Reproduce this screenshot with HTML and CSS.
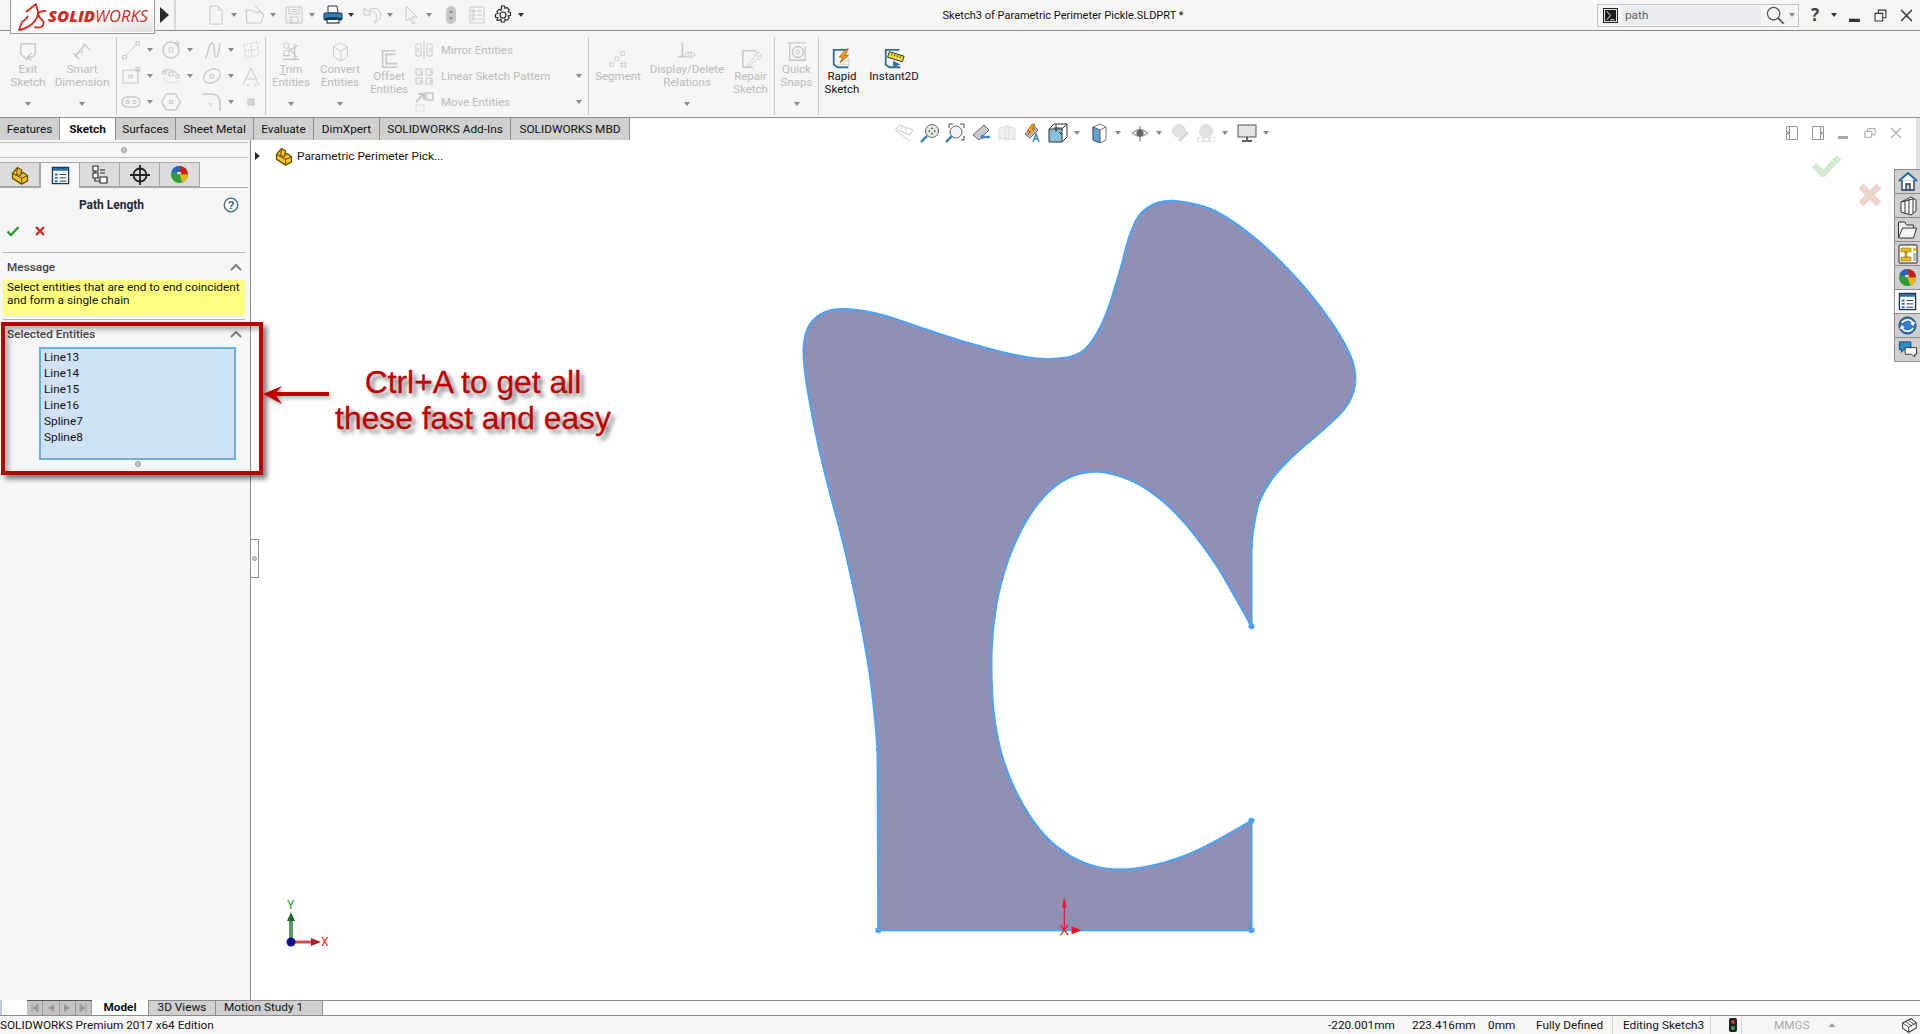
FILE: index.html
```html
<!DOCTYPE html>
<html lang="en">
<head>
<meta charset="utf-8">
<title>Sketch3 of Parametric Perimeter Pickle.SLDPRT</title>
<link rel="stylesheet" href="styles.css">
</head>
<body>
<svg class="defs" width="0" height="0" aria-hidden="true">
  <symbol id="part" viewBox="0 0 24 24"><path d="M3 10 9 3l5 3-1 5 3-2 5 4v6l-7 4-11-7z" fill="#f4c430" stroke="#6b5200" stroke-width="1.600" stroke-linejoin="round"/><path d="M3 10l11 6v7M14 16l7-3M9 3l-1 8 5 2" fill="none" stroke="#6b5200" stroke-width="1.300"/></symbol>
  <symbol id="list" viewBox="0 0 20 20"><rect x="1.500" y="1.500" width="17" height="17" fill="#fff" stroke="#1c3552" stroke-width="1.400"/><rect x="2" y="2" width="16" height="3" fill="#2d6ea8"/><path d="M4 8h3v2H4zM4 11.500h3v2H4zM4 15h3v2H4z" fill="#2d6ea8"/><path d="M9 9h7M9 12.500h7M9 16h7" stroke="#1c3552"/></symbol>
  <symbol id="ball" viewBox="0 0 20 20"><circle cx="10" cy="10" r="9" fill="#2f9e3a"/><path d="M10 10V1A9 9 0 0 1 19 10z" fill="#c8201a"/><path d="M10 10V1A9 9 0 0 0 1.500 7z" fill="#2566c4"/><path d="M10 10h9a9 9 0 0 1-6 8.500z" fill="#e9b714"/><path d="M7 8q3-2 5 0l-1 2q-2-1-3 0z" fill="#fff" opacity=".8"/></symbol>
</svg>

<header class="titlebar">
  <div class="logo">
    <svg class="ds" viewBox="0 0 30 28" width="30" height="28"><path d="M9 9 19 1l2 8q0 7-6 12-6 5-13 6l3-8q4-2 6-6M29 8q-7 0-8 3 1 4 5 7 2 4-2 6-3 1-7 0" fill="none" stroke="#d32b1e" stroke-width="1.800" stroke-linejoin="round"/></svg>
    <span class="logo-text"><b>SOLID</b>WORKS</span>
  </div>
  <div class="flyout"><i class="tri-right"></i></div>
  <div class="quick">
    <div class="qa"><svg viewBox="0 0 20 20" class="ic20 off"><path d="M4 1h8l4 4v14H4zM12 1v4h4"/></svg><i class="caret"></i></div>
    <div class="qa"><svg viewBox="0 0 20 20" class="ic20 off"><path d="M1 5h6l2 2h8l-1 2 3 0-3 9H2zM10 1l5 5-3 3"/></svg><i class="caret"></i></div>
    <div class="qa"><svg viewBox="0 0 20 20" class="ic20 off"><path d="M2 2h16v16H2zM5 2v7h10V2M6 12h8v6H6zM8 14v3M7 4.500h6M7 6.500h6"/></svg><i class="caret"></i></div>
    <div class="qa"><svg viewBox="0 0 20 20" class="ic20"><path d="M5 1h9l1 7H5z" fill="#fff" stroke="#333"/><rect x="1" y="8" width="18" height="7" rx="1" fill="#2c7fb8" stroke="#0d3b66"/><rect x="4" y="13" width="12" height="5" fill="#fff" stroke="#111"/><path d="M1 14h18" stroke="#0d3b66" stroke-width="2"/></svg><i class="caret dark"></i></div>
    <div class="qa"><svg viewBox="0 0 20 20" class="ic20 off"><path d="M2 3v7h7L6.500 7.500C10 5 15 7 15 12c0 2-1 4-3 6 5-2 7-5 7-8 0-6-8-9-13-4z"/></svg><i class="caret"></i></div>
    <div class="qa"><svg viewBox="0 0 20 20" class="ic20 off"><path d="M5 1v15l4-3 3 6 2-1-3-6h5z"/></svg><i class="caret"></i></div>
    <div class="qb"><svg viewBox="0 0 20 20" class="ic20"><rect x="5" y="1" width="10" height="18" rx="5" fill="#c8c8c8"/><path d="M10 5l-2 3h4zM10 15l-2-3h4z" fill="#8a8a8a"/></svg></div>
    <div class="qb"><svg viewBox="0 0 20 20" class="ic20 off"><path d="M3 2h14v16H3zM5 5h3v2H5zM5 9h3v2H5zM5 13h3v2H5zM10 6h5M10 10h5M10 14h5"/></svg></div>
    <div class="qa"><svg viewBox="0 0 20 20" class="ic20"><path d="M8.500 1h3l.5 2.500 2-1 2.200 2.200-1.200 2 2.500.8v3l-2.500.5 1.200 2.200-2.200 2.200-2-1.200-.5 2.800h-3l-.5-2.800-2 1.200L3.800 15 5 12.800 2.500 12.300v-3L5 8.500l-1.200-2L6 4.300l2 1z" fill="none" stroke="#222" stroke-width="1.100"/><circle cx="10" cy="10" r="3" fill="none" stroke="#222" stroke-width="1.100"/></svg><i class="caret dark"></i></div>
  </div>
  <div class="doc-title">Sketch3 of Parametric Perimeter Pickle.SLDPRT *</div>
  <div class="search">
    <svg viewBox="0 0 16 16" class="ic-prompt"><rect x=".5" y=".5" width="15" height="15" fill="#fff" stroke="#111"/><rect x="2" y="2" width="12" height="12" fill="#1b1b1b"/><path d="M4 3.500 8 8l-4 4.500M8 12.500h4" fill="none" stroke="#fff"/></svg>
    <span class="search-field">path</span>
    <svg viewBox="0 0 20 20" class="ic-mag"><circle cx="8" cy="8" r="6.500" fill="none" stroke="#555" stroke-width="1.300"/><path d="M12.500 12.500l6 6" stroke="#555" stroke-width="2"/></svg>
    <i class="caret"></i>
  </div>
  <div class="win">
    <span class="help">?</span><i class="caret dark help-caret"></i>
    <svg viewBox="0 0 12 12" class="win-ic"><rect x="1" y="9" width="10" height="3" fill="#333"/></svg>
    <svg viewBox="0 0 12 12" class="win-ic"><path d="M1 4h7v7H1zM4 4V1h7v7H8" fill="none" stroke="#333"/></svg>
    <svg viewBox="0 0 12 12" class="win-ic"><path d="M1 1l10 10M11 1 1 11" stroke="#333" stroke-width="1.300"/></svg>
  </div>
</header>

<section class="ribbon">
  <div class="tool w56">
    <svg viewBox="0 0 24 24" class="ic22 off"><path d="M4 3h16v9M4 3v11l6 6h2M20 12c0 4-3 6-8 6M16 13l-5 5 5 3" stroke-width="1.500"/></svg>
    <span class="lbl">Exit<br>Sketch</span><i class="caret bottom"></i>
  </div>
  <div class="tool w52">
    <svg viewBox="0 0 24 24" class="ic22 off"><path d="M4 17 14 6M14 3l7 7M2 13l7 7M12 8l3-5M9 12l-3 3M13 11l-2 2" stroke-width="1.500"/></svg>
    <span class="lbl">Smart<br>Dimension</span><i class="caret bottom"></i>
  </div>
  <div class="sep sep-left"></div>
  <div class="sketch-grid">
    <div class="cell"><svg viewBox="0 0 20 20" class="ic20 off"><path d="M4 16 16 4M1.500 15.500h4v3h-4zM15 1.500h3.500v3.500H15z"/></svg><i class="caret"></i></div>
    <div class="cell"><svg viewBox="0 0 20 20" class="ic20 off"><circle cx="10" cy="10" r="8" stroke-width="1.400"/><path d="M8 8h4v4H8zM15 2h3v3h-3z"/></svg><i class="caret"></i></div>
    <div class="cell"><svg viewBox="0 0 20 20" class="ic20 off"><path d="M3 18C6 18 6 3 10 3s1 14 4 14 3-8 4-14" stroke-width="1.500"/></svg><i class="caret"></i></div>
    <div class="cell"><svg viewBox="0 0 20 20" class="ic20 off dash"><path d="M3 5l13-3 2 13-13 3zM10 3l1 14M4 11l13-2"/></svg></div>
    <div class="cell"><svg viewBox="0 0 20 20" class="ic20 off"><path d="M2 4h15v13H2zM8 9h3v3H8zM15 1.500h3.500V5H15z" stroke-width="1.200"/></svg><i class="caret"></i></div>
    <div class="cell"><svg viewBox="0 0 20 20" class="ic20 off"><path d="M1 7c2-3 6-4 9-3s7 3 8 6M8 6h4v4H8zM2 5h3v3H2zM15 9h3v3h-3z"/><path d="M3 12c2 5 10 7 15 2" stroke-dasharray="1.500 1.500"/></svg><i class="caret"></i></div>
    <div class="cell"><svg viewBox="0 0 20 20" class="ic20 off"><ellipse cx="10" cy="10" rx="9" ry="6.500" transform="rotate(-30 10 10)" stroke-width="1.400"/><path d="M8 8.500h3.500V12H8z"/></svg><i class="caret"></i></div>
    <div class="cell"><svg viewBox="0 0 20 20" class="ic20 off"><path d="M2 19 10 2l8 17M6 13h8M5 19h3M13 19h3"/></svg></div>
    <div class="cell"><svg viewBox="0 0 20 20" class="ic20 off"><rect x="1" y="5" width="18" height="10" rx="5" stroke-width="1.400"/><path d="M5 8.500h3v3H5zM12 8.500h3v3h-3z"/></svg><i class="caret"></i></div>
    <div class="cell"><svg viewBox="0 0 20 20" class="ic20 off"><path d="M5.500 2h9l5 8-5 8h-9l-5-8z" stroke-width="1.400"/><path d="M8.500 8.500h3v3h-3z"/></svg></div>
    <div class="cell"><svg viewBox="0 0 20 20" class="ic20 off"><path d="M1 2h8c6 0 9 3 9 9v8" stroke-width="1.600"/><path d="M7 11l3 3M10 11l-3 3"/></svg><i class="caret"></i></div>
    <div class="cell"><svg viewBox="0 0 20 20" class="ic20"><rect x="7" y="7" width="6" height="6" fill="#d6d6d6" stroke="#c4c4c4"/></svg></div>
  </div>
  <div class="sep"></div>
  <div class="tool w50">
    <svg viewBox="0 0 24 24" class="ic22 off"><circle cx="7" cy="5" r="3"/><circle cx="7" cy="13" r="3"/><path d="M9 7l10 11M9 11 19 5M3 20h18M16 3v18M3 16h8" stroke-width="1.400"/></svg>
    <span class="lbl"><u>T</u>rim<br>Entities</span><i class="caret bottom"></i>
  </div>
  <div class="tool w48">
    <svg viewBox="0 0 24 24" class="ic22 off"><path d="M12 2l8 4v11l-7 5-8-5V6zM4 6l9 5v11M13 11l7-5"/></svg>
    <span class="lbl">Convert<br>Entities</span><i class="caret bottom"></i>
  </div>
  <div class="tool low w50">
    <svg viewBox="0 0 24 24" class="ic22 off"><path d="M19 3H5v18h16M19 7H9v10h12" stroke-width="1.800"/></svg>
    <span class="lbl">Offset<br>Entities</span>
  </div>
  <div class="entity-list">
    <div class="row"><svg viewBox="0 0 20 20" class="ic20 off"><path d="M10 1v18M2 4h5v12H2zM13 4h5v12h-5zM4 8v4M16 8v4"/></svg><span class="lbl">Mirror Entities</span></div>
    <div class="row"><svg viewBox="0 0 20 20" class="ic20 off"><path d="M2 3h6v6H2zM12 3h6v6h-6zM2 12h6v6H2zM12 12h6v6h-6zM5 6h3v3M15 6h3v3M5 15h3v3M15 15h3v3"/></svg><span class="lbl">Linear Sketch Pattern</span><i class="caret end"></i></div>
    <div class="row"><svg viewBox="0 0 20 20" class="ic20 off"><rect x="12" y="1" width="7" height="7" stroke-width="1.500"/><path d="M2 10 9 3M4 2h6v6" stroke-width="1.800"/><path d="M2 13h8v7H2z" stroke-dasharray="1.500 1.500"/></svg><span class="lbl">Move Entities</span><i class="caret end"></i></div>
  </div>
  <div class="sep"></div>
  <div class="tool low w58">
    <svg viewBox="0 0 24 24" class="ic22 off"><path d="M3 16h4v4H3zM9 10h4v4H9zM15 4h4v4h-4zM16 14v8M20 14v8M14 17h8M14 20h8"/></svg>
    <span class="lbl">Segment</span>
  </div>
  <div class="tool w80">
    <svg viewBox="0 0 24 24" class="ic22 off"><path d="M7 2v14M2 17h9" stroke-width="1.600"/><path d="M9 15c3-4 9-4 12 0-3 4-9 4-12 0z"/><circle cx="15" cy="15" r="2"/></svg>
    <span class="lbl">Display/Delete<br>Relations</span><i class="caret bottom"></i>
  </div>
  <div class="tool low w47">
    <svg viewBox="0 0 24 24" class="ic22 off"><path d="M3 3h15M3 3v18h11" stroke-width="1.800"/><path d="M8 18l8-8c-1-3 1-6 5-5l-3 3 2 2 3-3c1 4-2 6-5 5l-8 8z"/></svg>
    <span class="lbl">Repair<br>Sketch</span>
  </div>
  <div class="sep"></div>
  <div class="tool w43">
    <svg viewBox="0 0 24 24" class="ic22 off"><path d="M2 2h20M4 2v19h17V6" stroke-width="1.500"/><circle cx="13" cy="12" r="6" stroke-width="1.500"/><circle cx="13" cy="12" r="2"/></svg>
    <span class="lbl">Quick<br>Snaps</span><i class="caret bottom"></i>
  </div>
  <div class="sep"></div>
  <div class="tool low on w46">
    <svg viewBox="0 0 24 24" class="ic22"><path d="M18 2H3v16l4 3h12" fill="none" stroke="#2b7497" stroke-width="2"/><path d="M6 18h15M10 14h11M14 10v11M19 10v11" stroke="#ccc" stroke-width=".7"/><path d="M17 1 9 10h4l-3 6 9-8h-4l4-7z" fill="#f2a413" stroke="#b03a00" stroke-width=".8"/></svg>
    <span class="lbl">Rapid<br>Sketch</span>
  </div>
  <div class="tool low on w58">
    <svg viewBox="0 0 24 24" class="ic22"><path d="M18 2H3v16l4 3h12" fill="none" stroke="#2b7497" stroke-width="2"/><path d="M7 4 23 9l-2 6L5 10z" fill="#f6df3a" stroke="#222"/><path d="M10 6l-.7 2M13 7l-.7 2M16 8l-.7 2M19 9l-.7 2" stroke="#222"/><path d="M11 14l8 4-8 3z" fill="#2b7497"/></svg>
    <span class="lbl">Instant2D</span>
  </div>
</section>

<main class="workspace">
  <nav class="cmd-tabs">
    <span class="cmd-tab">Features</span>
    <span class="cmd-tab active">Sketch</span>
    <span class="cmd-tab">Surfaces</span>
    <span class="cmd-tab">Sheet Metal</span>
    <span class="cmd-tab">Evaluate</span>
    <span class="cmd-tab">DimXpert</span>
    <span class="cmd-tab">SOLIDWORKS Add-Ins</span>
    <span class="cmd-tab">SOLIDWORKS MBD</span>
  </nav>
  <div class="main">
    <aside class="panel">
      <div class="handle-row"><i class="dot"></i></div>
      <div class="mgr-tabs">
        <span class="mgr-tab"><svg width="20" height="20"><use href="#part"/></svg></span>
        <span class="mgr-tab active"><svg width="19" height="19"><use href="#list"/></svg></span>
        <span class="mgr-tab"><svg viewBox="0 0 20 20" width="20" height="20"><path d="M3 1h5v5H3zM3 8h5v5H3zM10 12h7v6h-7zM5 6v2M5 13v3h5M10 5h5M10 8h5" fill="#fff" stroke="#222" stroke-width="1.100"/></svg></span>
        <span class="mgr-tab"><svg viewBox="0 0 20 20" width="20" height="20"><circle cx="10" cy="10" r="6.500" fill="none" stroke="#222" stroke-width="1.800"/><path d="M10 0v20M0 10h20" stroke="#222" stroke-width="1.800"/></svg></span>
        <span class="mgr-tab"><svg width="19" height="19"><use href="#ball"/></svg></span>
      </div>
      <div class="pm-title">
        <h1>Path Length</h1>
        <svg viewBox="0 0 16 16" class="pm-help"><circle cx="8" cy="8" r="6.800" fill="#fff" stroke="#3c6b90" stroke-width="1.300"/><text x="8" y="12" text-anchor="middle" class="help-q">?</text></svg>
      </div>
      <div class="pm-actions">
        <svg viewBox="0 0 14 14" width="14" height="14"><path d="M1.500 7.500 5 11l7.500-8" fill="none" stroke="#2d9a2d" stroke-width="2.400"/></svg>
        <svg viewBox="0 0 14 14" width="14" height="14"><path d="M3 3l8 8M11 3l-8 8" fill="none" stroke="#d8261a" stroke-width="2.200"/></svg>
      </div>
      <div class="rule first"></div>
      <div class="group-head"><span>Message</span><svg viewBox="0 0 12 8" class="chev"><path d="M1 7l5-5 5 5" fill="none" stroke="#777" stroke-width="1.800"/></svg></div>
      <div class="message">Select entities that are end to end coincident<br>and form a single chain</div>
      <div class="rule"></div>
      <div class="group-head"><span>Selected Entities</span><svg viewBox="0 0 12 8" class="chev"><path d="M1 7l5-5 5 5" fill="none" stroke="#777" stroke-width="1.800"/></svg></div>
      <ul class="entities">
        <li>Line13</li><li>Line14</li><li>Line15</li><li>Line16</li><li>Spline7</li><li>Spline8</li>
      </ul>
      <div class="list-grip"><i class="dot"></i></div>
    </aside>
    <div class="viewport">
      <div class="tree"><i class="tri-right small"></i><svg width="20" height="20"><use href="#part"/></svg><span>Parametric Perimeter Pick...</span></div>
    </div>
  </div>

  <svg class="sketch" viewBox="0 0 1568 1568" preserveAspectRatio="none">
    <path class="profile" d="M257 1508L255 1145Q245 1040 230 970Q215 900 192 820Q170 740 145 670Q120 600 102 540Q85 480 73 425Q58 360 63 327Q68 295 89 280Q110 265 137 261Q165 258 207 262Q250 266 300 279Q350 292 415 309Q480 326 550 340Q620 354 660 358Q700 362 740 358Q780 354 800 338Q820 322 837 296Q854 270 868 235Q882 200 897 160Q908 120 922 96Q935 68 960 56Q990 40 1030 42Q1110 48 1155 70Q1200 90 1250 123Q1300 155 1350 198Q1400 241 1440 285Q1478 327 1495 362Q1510 398 1499 424Q1490 450 1460 473Q1430 496 1380 528Q1330 560 1300 587Q1270 614 1255 642Q1240 670 1232 735L1232 897Q1180 825 1155 792Q1130 760 1085 715Q1040 670 995 642Q950 614 915 603Q880 592 850 588Q820 584 785 590Q750 596 715 618Q680 640 650 677Q620 714 597 762Q575 810 565 855Q555 900 553 945Q551 990 555 1040Q559 1090 574 1140Q590 1190 620 1235Q650 1280 680 1307Q710 1335 745 1352Q780 1370 815 1378Q850 1386 890 1386Q930 1386 985 1376Q1040 1366 1090 1348Q1140 1330 1232 1288L1232 1508Z"/>
    <ellipse class="pt" cx="257" cy="1508" rx="8" ry="6"/><ellipse class="pt" cx="1232" cy="1508" rx="8" ry="6"/><ellipse class="pt" cx="1232" cy="1288" rx="8" ry="6"/><ellipse class="pt" cx="1232" cy="897" rx="8" ry="6"/><ellipse class="pt small" cx="1232" cy="735" rx="5" ry="4"/><ellipse class="pt small" cx="255" cy="1145" rx="5" ry="4"/>
    <path class="org" d="M743 1508V1455M733 1498l20 20M753 1498l-20 20"/>
    <path class="org-fill" d="M743 1442l6 20h-12zM762 1500l26 8-26 8z"/>
  </svg>

  <svg class="triad" viewBox="0 0 50 50" width="50" height="50">
    <path d="M11 36V14" stroke="#5a9a64" stroke-width="4"/>
    <path d="M11 8l4 9H7z" fill="#1f6b2c"/>
    <path d="M11 38H33" stroke="#c85050" stroke-width="3"/>
    <path d="M41 38l-10 4v-8z" fill="#b02020"/>
    <circle cx="11" cy="38" r="4.500" fill="#12128c"/>
  </svg>
  <span class="axis y">Y</span><span class="axis x">X</span>

  <div class="view-tools">
    <svg viewBox="0 0 20 20" class="vt"><path d="M2 6 6 2l13 5-3 5zM2 8l14 10M8 3v3M12 5v3" fill="none" stroke="#ddd" stroke-width="1.500"/></svg>
    <svg viewBox="0 0 20 20" class="vt"><circle cx="12" cy="8" r="6.500" fill="#e8e8e8" stroke="#666"/><path d="M7 13 1 19" stroke="#3f86bf" stroke-width="2.500"/><path d="M12 4l-1.500 2h3zM12 12l-1.500-2h3zM8 8l2-1.500v3zM16 8l-2-1.500v3z" fill="#4a7f4a"/></svg>
    <svg viewBox="0 0 20 20" class="vt"><circle cx="11" cy="9" r="6" fill="#eef3f7" stroke="#666"/><path d="M7 13 1 19" stroke="#3f86bf" stroke-width="2.500"/><path d="M4 5V1h4M15 1h4v4M19 13v4h-3" fill="none" stroke="#444"/></svg>
    <svg viewBox="0 0 20 20" class="vt"><path d="M2 12 13 2l5 5L8 17z" fill="#c9c9c9" stroke="#666"/><path d="M12 14h7" stroke="#3f86bf" stroke-width="2.500"/><path d="M12 11l-3 3 3 3z" fill="#3f86bf"/></svg>
    <svg viewBox="0 0 20 20" class="vt"><path d="M2 6q8-6 16 0v11q-4-3-6 0h-4q-2-3-6 0z" fill="#efefef" stroke="#ddd"/><path d="M8 5v12M12 5v12" stroke="#ddd"/></svg>
    <svg viewBox="0 0 20 20" class="vt"><path d="M3 11 12 3l4 4-8 8z" fill="#bbb" stroke="#666"/><path d="M10 1 5 8h3L6 12l7-6h-3l3-5z" fill="#f2a413" stroke="#b03a00" stroke-width=".6"/><path d="M11 19l3-8 3 8M12 16h4" fill="none" stroke="#3f86bf" stroke-width="1.500"/></svg>
    <span class="vt-group"><svg viewBox="0 0 20 20" class="vt"><path d="M1 6h13v13H1z" fill="#8bc0dc" stroke="#333"/><path d="M1 6l5-5h13v13l-5 5M14 6l5-5M8 1v8M6 5h8M11 9l3 3" fill="none" stroke="#333"/></svg><i class="caret"></i></span>
    <span class="vt-group"><svg viewBox="0 0 20 20" class="vt"><path d="M4 4 11 1l6 3v13l-6 3-7-3z" fill="#fff" stroke="#777"/><path d="M4 4l7 3v13l-7-3z" fill="#5fa5cc" stroke="#557"/><path d="M11 7l6-3" stroke="#777"/></svg><i class="caret"></i></span>
    <span class="vt-group"><svg viewBox="0 0 20 20" class="vt"><path d="M2 10q8-7 16 0-8 7-16 0z" fill="#ddd" stroke="#888"/><circle cx="10" cy="10" r="3.500" fill="#666"/><path d="M10 3v15" stroke="#666"/></svg><i class="caret"></i></span>
    <svg viewBox="0 0 20 20" class="vt"><circle cx="9" cy="8" r="7" fill="#e2e2e2"/><path d="M8 17 17 8l2 2-9 9z" fill="#d5d5d5"/></svg>
    <span class="vt-group"><svg viewBox="0 0 20 20" class="vt"><circle cx="10" cy="8" r="7" fill="#e0e0e0"/><path d="M1 14h18v5H1z" fill="#e6e6e6"/><path d="M3 15h3v3H3zM9 15h3v3H9zM15 15h3v3h-3z" fill="#fff"/></svg><i class="caret"></i></span>
    <span class="vt-group"><svg viewBox="0 0 20 20" class="vt"><rect x="1" y="2" width="18" height="12" fill="#e4e4e4" stroke="#555"/><path d="M10 14v3M5 18h10" stroke="#333" stroke-width="1.500"/></svg><i class="caret"></i></span>
  </div>

  <div class="doc-win">
    <svg viewBox="0 0 12 14" class="dw"><path d="M.5.500h11v13H.5zM3.500.500v13M3 5 1 7l2 2z" fill="none" stroke="#999"/></svg>
    <svg viewBox="0 0 12 14" class="dw"><path d="M.5.500h11v13H.5zM8.500.500v13" fill="none" stroke="#999"/><path d="M9 5l2 2-2 2z" fill="#999"/></svg>
    <svg viewBox="0 0 12 14" class="dw"><rect y="10" width="10" height="3" fill="#aaa"/></svg>
    <svg viewBox="0 0 14 14" class="dw"><path d="M1 5h8v7H1zM4 5V2h9v7H9" fill="none" stroke="#999"/></svg>
    <svg viewBox="0 0 12 12" class="dw"><path d="M1 1l10 10M11 1 1 11" stroke="#aaa" stroke-width="1.200"/></svg>
  </div>

  <svg class="cc-ok" viewBox="0 0 30 24" width="30" height="24"><path d="M2 12l9 9L27 4" fill="none" stroke="#d7e9d2" stroke-width="6.500"/></svg>
  <svg class="cc-no" viewBox="0 0 26 26" width="26" height="26"><path d="M4 4l18 18M22 4 4 22" fill="none" stroke="#efd3cf" stroke-width="7"/></svg>

  <div class="edge-strip"></div>
  <div class="task-pane">
    <span class="tp"><svg viewBox="0 0 20 20" width="20" height="20"><path d="M1 9 10 1l9 8M4 8v10h12V8M8 18v-6h4v6" fill="#fff" stroke="#1c3552" stroke-width="1.300"/><path d="M1 9 10 1l9 8" fill="none" stroke="#1f6fa8" stroke-width="2"/></svg></span>
    <span class="tp"><svg viewBox="0 0 20 20" width="20" height="20"><path d="M3 6l10-5 5 3v11l-5 4-10-3z" fill="#fff" stroke="#333"/><path d="M7 5v12M11 3v15M15 3v14M3 6l12-3" fill="none" stroke="#333"/></svg></span>
    <span class="tp"><svg viewBox="0 0 20 20" width="21" height="20"><path d="M1 18V2h6l2 3h7v3" fill="#f0f0f0" stroke="#333"/><path d="M1 18 5 8h14l-3 10z" fill="#f5f5f5" stroke="#333"/></svg></span>
    <span class="tp"><svg viewBox="0 0 20 20" width="20" height="20"><rect x="1" y="1" width="18" height="18" rx="1" fill="#fff" stroke="#222"/><path d="M3 4h10v4H3zM3 13h10v4H3zM7 8h2v5H7z" fill="#edbb1f" stroke="#7a5a00" stroke-width=".5"/><path d="M15 4h3v3h-3z" fill="#edbb1f"/><path d="M15 9h3v8h-3z" fill="#bbb"/></svg></span>
    <span class="tp"><svg width="19" height="19"><use href="#ball"/></svg></span>
    <span class="tp active"><svg width="19" height="19"><use href="#list"/></svg></span>
    <span class="tp"><svg viewBox="0 0 20 20" width="19" height="19"><circle cx="10" cy="10" r="9" fill="#2f7fd0" stroke="#1a3e66"/><path d="M3 8c1-6 11-7 13-2h3l-3 5-4-4h2c-2-3-7-2-9 1zM17 12c-1 6-11 7-13 2H1l3-5 4 4H6c2 3 7 2 9-1z" fill="#fff" stroke="#1a3e66" stroke-width=".5"/></svg></span>
    <span class="tp"><svg viewBox="0 0 20 20" width="20" height="19"><path d="M1 2h12v8H6l-3 3v-3H1z" fill="#2f8fc8" stroke="#1a3e66"/><path d="M7 8h12v7h-2v3l-3-3H7z" fill="#fff" stroke="#333"/></svg></span>
  </div>

  <div class="callout-box"></div>
  <svg class="callout-arrow" viewBox="0 0 70 24" width="70" height="24"><path class="ca-line" d="M10 12H66"/><path class="ca-head" d="M0 12 19 4l-7 8 7 10z"/></svg>
  <p class="callout-text">Ctrl+A to get all<br>these fast and easy</p>
  <div class="sash"><i class="dot"></i></div>
</main>

<div class="sheet-bar">
  <i class="sheet-grip"></i>
  <div class="sheet-nav">
    <span><svg viewBox="0 0 10 10" width="10" height="10"><path d="M2 1v8M8 1 3 5l5 4z" fill="#9a9a9a" stroke="#9a9a9a"/></svg></span>
    <span><svg viewBox="0 0 10 10" width="10" height="10"><path d="M8 1 2 5l6 4z" fill="#9a9a9a"/></svg></span>
    <span><svg viewBox="0 0 10 10" width="10" height="10"><path d="M2 1l6 4-6 4z" fill="#9a9a9a"/></svg></span>
    <span><svg viewBox="0 0 10 10" width="10" height="10"><path d="M8 1v8M2 1l5 4-5 4z" fill="#9a9a9a" stroke="#9a9a9a"/></svg></span>
  </div>
  <span class="sheet-tab active">Model</span>
  <span class="sheet-tab w68">3D Views</span>
  <span class="sheet-tab w108">Motion Study 1</span>
  <span class="sheet-rest"></span>
</div>

<footer class="status">
  <span class="st-left">SOLIDWORKS Premium 2017 x64 Edition</span>
  <span>-220.001mm</span>
  <span>223.416mm</span>
  <span>0mm</span>
  <span>Fully Defined</span>
  <span class="st-sep"></span>
  <span>Editing Sketch3</span>
  <span class="st-light"><svg viewBox="0 0 8 14" width="8" height="14"><rect width="8" height="14" rx="2" fill="#222"/><circle cx="4" cy="4" r="2" fill="#c0392b"/><circle cx="4" cy="10" r="2" fill="#3fa34d"/></svg></span>
  <span></span>
  <span class="st-units">MMGS</span>
  <span class="st-tail"><i class="caret up"></i><svg viewBox="0 0 20 20" width="17" height="17"><path d="M2 7 12 2l6 5v6l-9 5-7-5z" fill="#fff" stroke="#333" stroke-width="1.200"/><path d="M2 7l7 5v6M9 12l9-5M6 6l7 5M9 4l7 5" fill="none" stroke="#333"/></svg></span>
</footer>
</body>
</html>
```

FILE: styles.css
```css
* { box-sizing: border-box; }
html, body { margin: 0; padding: 0; height: 100%; overflow: hidden; background: #fff; }
body { font: 11.800px/13px Roboto, "Liberation Sans", sans-serif; color: #111; }
.defs { position: absolute; }
i { display: block; }

.caret { width: 0; height: 0; border: solid transparent; border-width: 4px 3px 0; border-top-color: #8a8a8a; flex: none; }
.caret.dark { border-top-color: #333; }
.caret.up { border-width: 0 3px 4px; border-bottom-color: #999; border-top-color: transparent; }
.tri-right { width: 0; height: 0; border: solid transparent; border-width: 8px 0 8px 9px; border-left-color: #2b2b2b; }
.tri-right.small { border-width: 4px 0 4px 5px; }

.off, .off * { fill: none; stroke: #c8c8c8; }
.off.dash { stroke-dasharray: 1.500 1.500; }
.ic20 { width: 20px; height: 20px; flex: none; }
.ic22 { width: 22px; height: 22px; flex: none; display: block; }

/* title bar */
.titlebar { height: 31px; display: flex; align-items: center; background: #f6f6f6; border-bottom: 1px solid #8c8c8c; position: relative; z-index: 5; }
.logo { align-self: flex-start; margin-left: 10px; width: 145px; height: 34px; display: flex; align-items: center; padding-left: 6px; gap: 1px; background: linear-gradient(170deg, #fff 55%, #dcdcdc 100%); border: 1px solid #9a9a9a; border-top: 0; box-shadow: inset 0 0 0 1px #fff; flex: none; }
.ds { flex: none; }
.logo-text { font: italic 400 16.500px/1 "Open Sans", "Liberation Sans", sans-serif; color: #d32b1e; }
.logo-text b { font-weight: 800; }
.flyout { width: 21px; height: 30px; display: flex; align-items: center; justify-content: center; border-right: 2px solid #d8d8d8; flex: none; }
.quick { display: flex; align-items: center; padding-left: 28px; width: 353px; flex: none; }
.qa { width: 39px; display: flex; align-items: center; padding-left: 2px; gap: 5px; flex: none; }
.qb { width: 26px; display: flex; justify-content: center; flex: none; }
.qa:last-child { padding-left: 3px; }
.doc-title { flex: 1; text-align: center; font-size: 11px; }
.search { width: 202px; height: 23px; border: 1px solid #c4c4c4; display: flex; align-items: center; padding: 0 7px 0 5px; flex: none; }
.ic-prompt { width: 15px; height: 15px; flex: none; }
.search-field { width: 139px; height: 19px; margin-left: 4px; padding-left: 3px; background: #e9ebee; color: #666; line-height: 19px; flex: none; }
.ic-mag { width: 19px; height: 19px; margin-left: 5px; flex: none; }
.search .caret { margin-left: 4px; }
.win { width: 121px; display: flex; align-items: center; padding-left: 12px; flex: none; }
.help { font: 700 17px/20px "Noto Sans", sans-serif; color: #444; width: 12px; }
.help-caret { margin-left: 8px; }
.win-ic { width: 13px; height: 13px; margin-left: 13px; flex: none; }
.win-ic:first-of-type { margin-left: 11px; }

/* ribbon */
.ribbon { height: 87px; display: flex; background: #f6f6f6; border-bottom: 1px solid #8c8c8c; color: #bcbcbc; }
.lbl { display: block; text-align: center; white-space: nowrap; font-size: 11.500px; }
.tool { display: flex; flex-direction: column; align-items: center; padding-top: 10px; flex: none; }
.tool .lbl { height: 26px; }
.tool .caret.bottom { margin-top: 13px; }
.tool.low { padding-top: 17px; }
.tool.on { color: #111; }
.w43 { width: 43px; } .w46 { width: 46px; } .w47 { width: 47px; } .w48 { width: 48px; }
.w50 { width: 50px; } .w52 { width: 52px; } .w56 { width: 56px; } .w58 { width: 58px; } .w80 { width: 80px; }
.sep { width: 1px; height: 78px; margin-top: 6px; background: #c8c8c8; flex: none; }
.sep-left { margin-left: 8px; }
.sketch-grid { width: 148px; padding: 6px 0 0 4px; display: grid; grid-template-columns: 40px 41px 39px 20px; grid-auto-rows: 26px; flex: none; }
.cell { display: flex; align-items: center; gap: 6px; }
.entity-list { width: 174px; padding-top: 6px; flex: none; }
.row { height: 26px; display: flex; align-items: center; padding-right: 6px; }
.row .lbl { margin-left: 7px; }
.caret.end { margin-left: auto; }

/* workspace */
.workspace { height: 882px; position: relative; overflow: hidden; }
.cmd-tabs { height: 22px; display: grid; grid-template-columns: 60px 56px 60px 78px 60px 66px 131px 119px; width: 630px; }
.cmd-tab { background: #d0d0d0; border-right: 1px solid #8c8c8c; border-bottom: 1px solid #8c8c8c; text-align: center; line-height: 22px; white-space: nowrap; }
.cmd-tab.active { background: #fff; border-bottom-color: #fff; font-weight: 700; }
.main { height: 860px; display: flex; }
.panel { width: 251px; background: #f6f6f6; border-right: 1px solid #8c8c8c; flex: none; }
.viewport { flex: 1; background: #fff; min-width: 0; }
.dot { width: 6px; height: 6px; border-radius: 50%; background: #c9c9c9; border: 1px solid #999; }
.handle-row { width: 248px; height: 16px; margin-top: 2px; border: solid #c0c0c0; border-width: 1px 0; display: flex; align-items: center; justify-content: center; }
.mgr-tabs { width: 248px; height: 26px; margin-top: 4px; display: flex; border-bottom: 1px solid #a8a8a8; }
.mgr-tab { width: 40px; height: 25px; background: #dcdcdc; border: 1px solid #a8a8a8; border-left: 0; display: flex; align-items: center; justify-content: center; }
.mgr-tab.active { background: #f6f6f6; height: 26px; border-bottom: 0; border-left: 1px solid #a8a8a8; }
.pm-title { height: 34px; display: flex; align-items: center; padding-right: 7px; width: 246px; }
.pm-title h1 { flex: 1; margin: 0; text-align: center; font-size: 12px; line-height: 14px; font-weight: 700; color: #1c2a3a; padding-left: 0; }
.pm-help { width: 16px; height: 16px; flex: none; }
.help-q { font: 700 11px "Liberation Sans", sans-serif; fill: #2b5a80; }
.pm-actions { height: 18px; display: flex; align-items: center; gap: 13px; padding-left: 6px; }
.rule { height: 1px; margin: 4px 5px 0 3px; background: #b4b4b4; }
.rule.first { margin-top: 12px; }
.group-head { height: 27px; display: flex; align-items: center; justify-content: space-between; padding: 1px 6px 0 7px; color: #444; font-weight: 500; width: 248px; }
.chev { width: 12px; height: 8px; }
.message { margin: 0 5px 0 3px; height: 35px; padding: 1px 0 0 4px; background: #ffff80; color: #111; white-space: nowrap; }
.entities { list-style: none; margin: 0 0 0 39px; padding: 0 0 0 3px; width: 197px; height: 113px; background: #cfe3f7; border: 2px solid #68b2e6; }
.entities li { line-height: 16px; height: 16px; }
.list-grip { width: 197px; margin: 1px 0 0 39px; display: flex; justify-content: center; }
.tree { display: flex; align-items: center; height: 20px; margin-top: 6px; padding-left: 4px; }
.tree svg { margin-left: 14px; margin-right: 3px; flex: none; }
.tree span { color: #111; }

/* over the canvas */
.sketch { position: absolute; left: 780px; top: 61.500px; width: 600px; height: 780px; }
.profile { fill: #918fb6; stroke: #4da3f2; stroke-width: 2.200px; vector-effect: non-scaling-stroke; stroke-linejoin: round; }
.pt { fill: #4da3f2; }
.org { fill: none; stroke: #f0141e; stroke-width: 1.200px; vector-effect: non-scaling-stroke; }
.org-fill { fill: #f0141e; }
.triad { position: absolute; left: 280px; top: 786px; }
.axis { position: absolute; font-size: 12px; line-height: 12px; }
.axis.y { left: 287px; top: 781px; color: #1f9a2a; }
.axis.x { left: 321px; top: 818px; color: #f01818; }

.view-tools { position: absolute; left: 894px; top: 5px; height: 20px; display: flex; align-items: center; gap: 5.700px; }
.vt { width: 20px; height: 20px; flex: none; }
.vt-group { display: flex; align-items: center; gap: 6px; width: 35px; flex: none; }

.doc-win { position: absolute; left: 1786px; top: 8px; height: 14px; display: flex; align-items: center; gap: 14px; }
.dw { width: 12px; height: 14px; flex: none; }

.cc-ok { position: absolute; left: 1812px; top: 35px; }
.cc-no { position: absolute; left: 1857px; top: 64px; }
.edge-strip { position: absolute; right: 0; top: 0; width: 4px; height: 51px; background: #dfe3e6; }
.task-pane { position: absolute; right: 0; top: 51px; width: 26px; display: flex; flex-direction: column; }
.tp { height: 24px; background: #d0d0d0; border: 1px solid #8c8c8c; border-right: 0; border-bottom: 0; display: flex; align-items: center; justify-content: center; }
.tp:last-child { height: 25px; border-bottom: 1px solid #8c8c8c; }
.tp.active { background: #fff; }

.callout-box { position: absolute; left: 1px; top: 204px; width: 262px; height: 153px; border: 4px solid #b50606; box-shadow: 4px 4px 5px rgba(0,0,0,.5), inset 4px 4px 5px rgba(0,0,0,.28); }
.callout-arrow { position: absolute; left: 263px; top: 264px; filter: drop-shadow(2px 2px 2px rgba(0,0,0,.35)); }
.ca-line { fill: none; stroke: #c00000; stroke-width: 4px; }
.ca-head { fill: #c00000; }
.callout-text { position: absolute; left: 300px; top: 246px; width: 346px; margin: 0; text-align: center; font: 31.800px/36px "Liberation Sans", Arial, sans-serif; color: #c00000; -webkit-text-stroke: .3px #c00000; text-shadow: 4px 4px 4px rgba(0,0,0,.55); }
.sash { position: absolute; left: 251px; top: 421px; width: 8px; height: 39px; background: #fff; border: 1px solid #8c8c8c; border-left: 0; display: flex; align-items: center; justify-content: center; }
.sash .dot { width: 5px; height: 5px; }

/* bottom */
.sheet-bar { height: 15px; display: flex; background: #fff; }
.sheet-grip { width: 2px; background: #b9c9e6; margin-right: 25px; flex: none; }
.sheet-nav { width: 65px; display: flex; background: #c4c4c4; border-top: 1px solid #555; flex: none; }
.sheet-nav span { flex: 1; display: flex; align-items: center; justify-content: center; border-right: 1px solid #9c9c9c; }
.sheet-tab { width: 56px; background: #fff; text-align: center; line-height: 14px; flex: none; white-space: nowrap; font-weight: 700; }
.sheet-tab.w68 { width: 68px; }
.sheet-tab.w108 { width: 108px; text-align: left; padding-left: 8px; }
.sheet-tab.w68, .sheet-tab.w108 { background: #d0d0d0; border: solid #8c8c8c; border-width: 1px 1px 0 1px; font-weight: 400; line-height: 12px; margin-right: -1px; }
.sheet-rest { flex: 1; border-top: 1px solid #8c8c8c; margin-left: 1px; }
.status { height: 19px; background: #f6f6f6; border-top: 1px solid #8c8c8c; display: grid; grid-template-columns: 1328px 84px 76px 48px 76px 11px 87px 32px 32px 55px 1fr; align-items: center; white-space: nowrap; line-height: 18px; }
.st-sep { height: 18px; border-left: 1px solid #d4d4d4; }
.st-light { height: 18px; border: solid #d4d4d4; border-width: 0 1px; display: flex; align-items: center; padding-left: 18px; }
.st-units { color: #a8a8a8; }
.st-tail { display: flex; align-items: center; justify-content: space-between; padding-right: 2px; }
```
